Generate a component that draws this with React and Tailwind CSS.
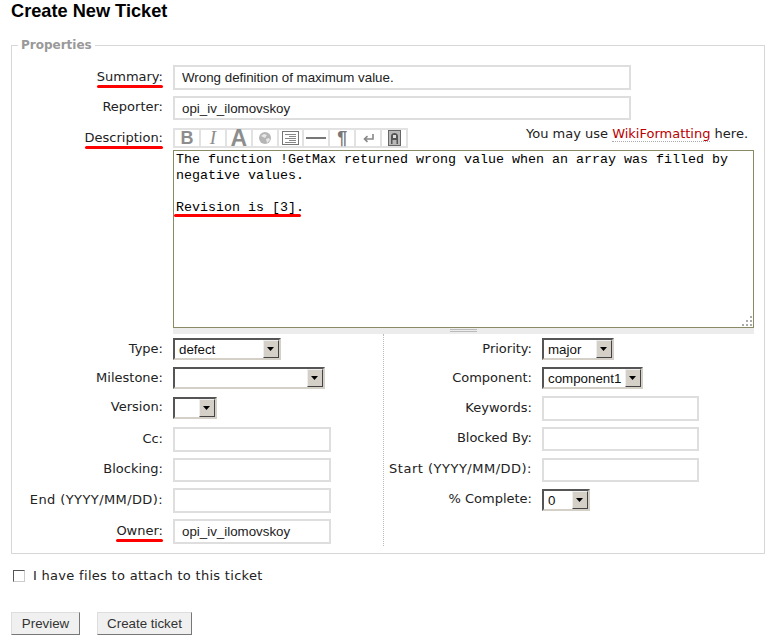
import React from "react";
import clsx from "clsx";

const LEFT = "w-[151px]";
const RIGHT = "w-[148px]";

// Label cell, with the optional red marker drawn over the screenshot
const Label = ({ className, marked, children }) => (
  <div className={clsx("shrink-0 text-right text-[13px] leading-[14px] text-[#222]", className)}>
    <span className="relative inline-block">
      {children}
      {marked && <span className="absolute left-0 right-0 top-[15px] h-[3px] rounded-full bg-[#f00]" />}
    </span>
  </div>
);

const TextField = ({ className = "w-[158px] h-[25px]", value = "" }) => (
  <input
    readOnly
    value={value}
    className={clsx(
      "border-2 border-[#dedede] bg-white pl-[7px] text-[13.33px] text-[#222] font-['Liberation_Sans',sans-serif] outline-none",
      className
    )}
  />
);

// Old style windows combo box
const Combo = ({ className, value = "" }) => (
  <div
    className={clsx(
      "flex h-[22px] items-stretch border-2 border-t-[#555] border-l-[#555] border-r-[#d4d0c8] border-b-[#d4d0c8] bg-white",
      className
    )}
  >
    <span className="flex-1 overflow-hidden pl-[4px] text-[13.33px] leading-[20px] text-[#111] font-['Liberation_Sans',sans-serif]">
      {value}
    </span>
    <span className="flex w-[16px] shrink-0 items-center justify-center border border-t-[#eee] border-l-[#eee] border-r-[#444] border-b-[#444] bg-[#d4d0c8]">
      <svg width="8" height="4" viewBox="0 0 8 4"><path d="M0 0h7L3.5 4z" fill="#000" /></svg>
    </span>
  </div>
);

const Row = ({ className, labelClass = "pb-[2px]", label, marked, children }) => (
  <div className={clsx("flex items-center gap-[10px]", className)}>
    <Label className={labelClass} marked={marked}>{label}</Label>
    {children}
  </div>
);

const Cell = ({ children }) => (
  <div className="flex h-full w-[26px] items-center justify-center border-r-2 border-[#e2e2e2] text-[#8d8d8d]">
    {children}
  </div>
);

const Toolbar = () => (
  <div className="flex h-[20px] w-[235px] border-2 border-r-0 border-[#e2e2e2] bg-white">
    <Cell><span className="text-[18px] font-bold leading-[16px] font-['Liberation_Sans',sans-serif]">B</span></Cell>
    <Cell><span className="text-[19px] italic leading-[16px] font-['Liberation_Serif',serif]">I</span></Cell>
    <Cell><span className="text-[23px] font-bold leading-[16px] font-['Liberation_Sans',sans-serif]">A</span></Cell>
    <Cell>
      <svg width="14" height="14" viewBox="0 0 14 14">
        <circle cx="7" cy="7" r="6" fill="#b5b5b5" />
        <path d="M3 5l3-2 3 1-2 3zM8 8l3-1 1 2-3 3z" fill="#e8e8e8" />
      </svg>
    </Cell>
    <Cell>
      <svg width="18" height="14" viewBox="0 0 18 14" fill="none" stroke="#777">
        <rect x="0.5" y="0.5" width="16" height="13" />
        <path d="M3 3.5h11M7 5.5h7M3 7.5h11M7 9.5h7M3 11.5h11" stroke="#888" />
      </svg>
    </Cell>
    <Cell><span className="h-[2px] w-[20px] bg-[#777]" /></Cell>
    <Cell><span className="text-[18px] font-bold leading-[16px] text-[#777] font-['Liberation_Sans',sans-serif]">¶</span></Cell>
    <Cell>
      <svg width="11" height="9" viewBox="0 0 11 9" fill="none" stroke="#888" strokeWidth="1.6">
        <path d="M10 0v5H2M4.5 2.2L1.5 5l3 2.8" />
      </svg>
    </Cell>
    <Cell>
      <svg width="13" height="16" viewBox="0 0 13 16">
        <rect x="0.5" y="0.5" width="12" height="15" fill="#b8b8b8" stroke="#666" />
        <path d="M3 14V6c0-4 7-4 7 0v8H8.5V10h-4v4z" fill="#555" />
        <rect x="5" y="5" width="3" height="3" fill="#ddd" />
      </svg>
    </Cell>
  </div>
);

const Btn = ({ className, children }) => (
  <button
    className={clsx(
      "h-[23px] border border-t-[#ddd] border-l-[#ddd] border-r-[#777] border-b-[#777] bg-[#f0f0f0] text-[13.33px] text-[#333] font-['Liberation_Sans',sans-serif]",
      className
    )}
  >
    {children}
  </button>
);

export default function App() {
  return (
    <div className="h-[640px] w-[771px] overflow-hidden bg-white pl-[11px] font-['DejaVu_Sans',sans-serif]">
      <h1 className="pt-[1px] text-[18.2px] font-bold leading-[20px] text-black font-['Liberation_Sans',sans-serif]">
        Create New Ticket
      </h1>

      <fieldset className="mt-[17px] h-[516px] w-[754px] border border-[#d7d7d7] pt-[13px]">
        <legend className="ml-[6px] px-[3px] text-[12px] font-bold leading-[14px] text-[#999]">Properties</legend>

        <Row labelClass={clsx(LEFT, "pb-[2px]")} label="Summary:" marked>
          <TextField className="h-[25px] w-[458px]" value="Wrong definition of maximum value." />
        </Row>
        <Row className="mt-[6px]" labelClass={clsx(LEFT, "pb-[2px]")} label="Reporter:">
          <TextField className="h-[24px] w-[458px]" value="opi_iv_ilomovskoy" />
        </Row>

        <div className="mt-[8px] flex items-center gap-[10px]">
          <Label className={LEFT} marked>Description:</Label>
          <Toolbar />
          <div className="ml-[108px] -mt-[8px] w-[224px] whitespace-nowrap text-[13px] leading-[14px] text-[#222]">
            You may use <a className="border-b border-dotted border-[#aaa] text-[#b00]">WikiFormatting</a> here.
          </div>
        </div>

        <div className="relative ml-[161px] mt-[2px] w-[581px]">
          <textarea
            readOnly
            className="block h-[178px] w-full resize-none overflow-hidden border border-[#8a8a64] bg-white px-[2px] pt-[1px] text-[13.33px] leading-[16px] text-black font-['Liberation_Mono',monospace] outline-none"
            defaultValue={"The function !GetMax returned wrong value when an array was filled by negative values.\n\nRevision is [3]."}
          />
          <span className="absolute left-[1px] top-[64px] h-[3px] w-[127px] rounded-full bg-[#f00]" />
          <svg className="absolute bottom-[2px] right-[2px]" width="10" height="10" viewBox="0 0 10 10" fill="#aaa">
            <rect x="8" y="0" width="2" height="2" /><rect x="4" y="4" width="2" height="2" /><rect x="8" y="4" width="2" height="2" />
            <rect x="0" y="8" width="2" height="2" /><rect x="4" y="8" width="2" height="2" /><rect x="8" y="8" width="2" height="2" />
          </svg>
        </div>

        <div className="ml-[161px] flex h-[6px] w-[581px] flex-col items-center bg-[#ececec] pt-[1px]">
          <span className="h-[3px] w-[27px] border-y border-[#bbb]" />
        </div>

        <div className="grid grid-cols-[372px_1fr]">
          <div className="h-[212px] border-r border-dotted border-[#bbb] pt-[4px]">
            <Row labelClass={LEFT} label="Type:"><Combo className="w-[108px]" value="defect" /></Row>
            <Row className="mt-[7px]" labelClass={LEFT} label="Milestone:"><Combo className="w-[152px]" /></Row>
            <Row className="mt-[8px]" labelClass={clsx(LEFT, "pb-[2px]")} label="Version:"><Combo className="w-[44px]" /></Row>
            <Row className="mt-[8px]" labelClass={clsx(LEFT, "pb-[2px]")} label="Cc:"><TextField /></Row>
            <Row className="mt-[6px]" labelClass={clsx(LEFT, "pb-[2px]")} label="Blocking:"><TextField className="h-[24px] w-[158px]" /></Row>
            <Row className="mt-[6px]" labelClass={clsx(LEFT, "pb-[2px] tracking-[0.4px]")} label="End (YYYY/MM/DD):"><TextField /></Row>
            <Row className="mt-[6px]" labelClass={clsx(LEFT, "pb-[2px]")} label="Owner:" marked><TextField value="opi_iv_ilomovskoy" /></Row>
          </div>
          <div className="pt-[4px]">
            <Row labelClass={RIGHT} label="Priority:"><Combo className="w-[72px]" value="major" /></Row>
            <Row className="mt-[7px]" labelClass={RIGHT} label="Component:"><Combo className="w-[101px]" value="component1" /></Row>
            <Row className="mt-[7px]" labelClass={clsx(RIGHT, "pb-[2px]")} label="Keywords:"><TextField className="h-[25px] w-[157px]" /></Row>
            <Row className="mt-[6px]" labelClass={clsx(RIGHT, "pb-[2px]")} label="Blocked By:"><TextField className="h-[24px] w-[157px]" /></Row>
            <Row className="mt-[7px]" labelClass={clsx(RIGHT, "pb-[2px] tracking-[0.5px]")} label="Start (YYYY/MM/DD):"><TextField className="h-[24px] w-[157px]" /></Row>
            <Row className="mt-[7px]" labelClass={clsx(RIGHT, "pb-[2px]")} label="% Complete:"><Combo className="w-[48px]" value="0" /></Row>
          </div>
        </div>
      </fieldset>

      <label className="mt-[15px] ml-[2px] flex items-center gap-[8px] text-[13px] leading-[14px] tracking-[0.3px] text-[#222]">
        <input
          type="checkbox"
          className="h-[12px] w-[12px] appearance-none border border-t-[#555] border-l-[#555] border-r-[#ccc] border-b-[#ccc] bg-white"
        />
        I have files to attach to this ticket
      </label>

      <div className="mt-[29px] flex gap-[17px]">
        <Btn className="w-[69px]">Preview</Btn>
        <Btn className="w-[95px]">Create ticket</Btn>
      </div>
    </div>
  );
}
